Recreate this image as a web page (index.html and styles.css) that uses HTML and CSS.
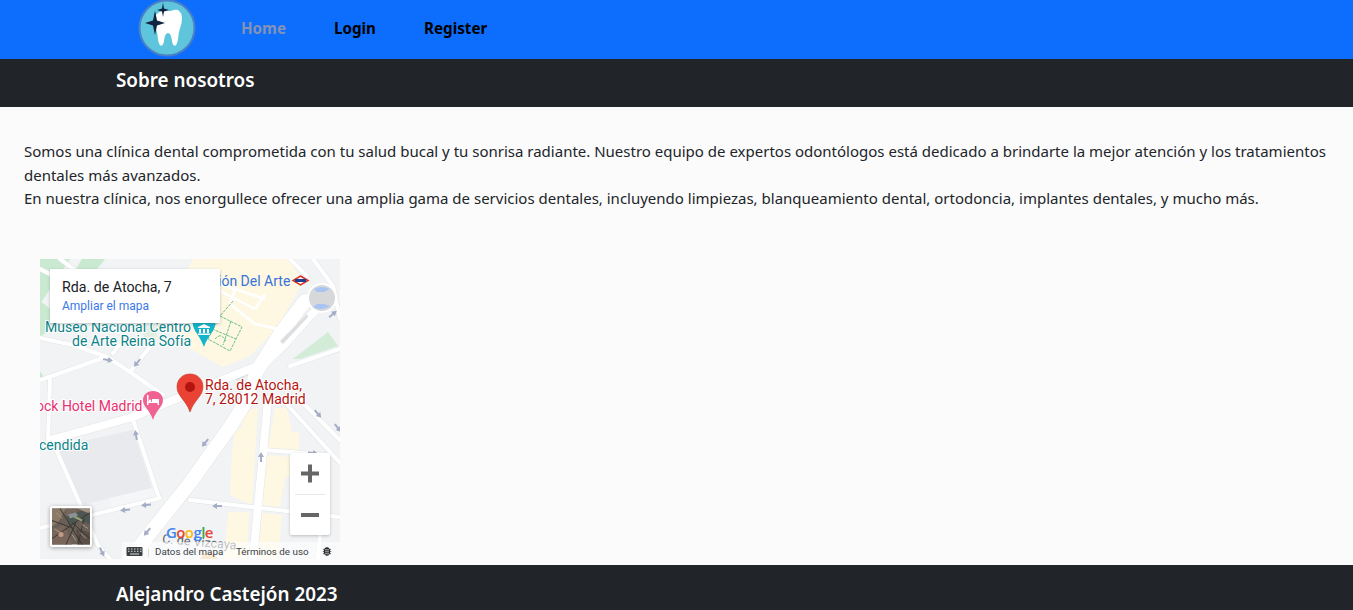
FILE: index.html
```html
<!DOCTYPE html>
<html lang="es">
<head>
<meta charset="utf-8">
<title>Sobre nosotros</title>
<link rel="stylesheet" href="styles.css">
</head>
<body>
<header class="topbar">
  <svg class="logo" viewBox="0 0 58 58" aria-label="Logo">
    <circle cx="29" cy="29" r="27.5" fill="#5fc5dc" stroke="#4a80c4" stroke-width="2"/>
    <path d="M24 12C27 10 30 12.500 33 12 36 11 39 10 41 12 44 14 44.500 19 43.500 24 42.500 29 41 31 40.500 36 40 41 39.500 45 37.500 46.500 35.500 47.500 34.500 45 34 42 33.500 38 32.500 34 30 34 27.500 34 26.500 38 26 42 25.500 45 24.500 47.500 22.500 46.500 20.500 45 20 41 19.500 36 19 31 16.500 28 16 23 15.500 18 19 13.500 24 12z" fill="#fff"/>
    <path d="M17 11.500 19 21.500 27 24 19 26.500 17 36 15 26.500 7 24 15 21.500z" fill="#10243f"/>
    <path d="M25 3.500 26 9.500 31 11 26 12.500 25 18 24 12.500 19 11 24 9.500z" fill="#10243f"/>
  </svg>
  <nav class="nav">
    <a class="nav-link is-active" href="#">Home</a>
    <a class="nav-link" href="#">Login</a>
    <a class="nav-link" href="#">Register</a>
  </nav>
</header>

<div class="band band-title"><h1 class="band-text">Sobre nosotros</h1></div>

<main class="content">
  <p class="intro">Somos una clínica dental comprometida con tu salud bucal y tu sonrisa radiante. Nuestro equipo de expertos odontólogos está dedicado a brindarte la mejor atención y los tratamientos dentales más avanzados.<br>En nuestra clínica, nos enorgullece ofrecer una amplia gama de servicios dentales, incluyendo limpiezas, blanqueamiento dental, ortodoncia, implantes dentales, y mucho más.</p>

  <div class="map">
    <svg class="map-canvas" viewBox="0 0 300 300">
      <defs>
        <path id="arrow" d="M-5-1H0V-3L5 0 0 3V1H-5z"/>
        <g id="roads-thin">
          <path d="M0 79 33 86 67 98 90 113 123 136M0 121 63 99M73 94 83 81M90 113 113 84M10 121 8 181M8 181 15 188 58 286 70 300M93 161 118 236M0 269 120 239"/>
          <path d="M243 141 300 204M260 141 300 181M225 191 290 196M280 276 278 300M250 107 300 90M250 0 267 17M273 0 293 27 300 60M150 241 300 258M0 10 50 35 100 55M20 0 60 30M110 30 145 50"/>
        </g>
        <g id="roads-mid">
          <path d="M10 181 93 158 150 134 217 107"/>
          <path d="M228 141 213 300"/>
          <path d="M217 112 245 85 270 57 283 45"/>
        </g>
        <g id="roads-wide">
          <path d="M90 300 107 278 150 224 190 168 207 141 217 112 240 75 265 42"/>
        </g>
      </defs>

      <rect width="300" height="300" fill="#f1f3f4"/>
      <path d="M17 188 93 171 112 229 70 239 43 246z" fill="#e9eaed"/>
      <path d="M70 239 112 229 118 236 72 250z" fill="#f5f6f7"/>
      <path d="M0 0H30L0 45z M42 0H65L48 22 30 20z M0 42 24 60 0 78z" fill="#c9ead1"/>
      <path d="M0 112 4 118 0 122z" fill="#c9ead1"/>
      <path d="M100 66 120 62 116 80 104 78z" fill="#e2efe2"/>
      <path d="M253 100 288 73 298 87 260 100z" fill="#d3ecd8"/>
      <path d="M153 0H250L260 20V28L238 68 210 97 183 108 147 88 120 62z" fill="#fef8e3"/>
      <path d="M195 171 192 193 190 236 212 246 218 149 200 151 197 161 203 168z M235 149H247L252 173 260 174 258 193 228 189z M226 196 250 198V218L245 219 240 248 222 246z M188 253H209L207 300H184z M222 254 242 256 238 300H218z" fill="#fef8e3"/>
      <path d="M193 118 213 108 216 112 197 122z" fill="#dcdee0"/>

      <g class="roads-edge">
        <use href="#roads-thin" class="w-thin-e"/>
        <use href="#roads-mid" class="w-mid-e"/>
        <use href="#roads-wide" class="w-wide-e"/>
      </g>
      <g class="roads-fill">
        <use href="#roads-thin" class="w-thin"/>
        <use href="#roads-mid" class="w-mid"/>
        <use href="#roads-wide" class="w-wide"/>
      </g>
      <path d="M240 82 267 55 268 58 243 85z" fill="#dcdee0"/>

      <path class="inner-road" d="M180 25 225 40M195 30 190 45 215 65 238 70M180 32 215 50M225 35 215 50M150 30 180 25"/>
      <path class="green-dash" d="M193 42 180 57M180 57 202 68 190 92 168 80 180 57M191 62 183 86M172 70 196 80M175 80C180 75 182 76 186 82"/>

      <circle cx="282" cy="39" r="15" fill="#fff"/>
      <circle cx="282" cy="39" r="13" fill="#d6d8da"/>
      <path d="M274 30Q282 26 290 30L284 33H277z M273 48Q282 53 290 47L284 45H277z" fill="#a9c4f2"/>

      <g class="arrows">
        <use href="#arrow" transform="translate(293 55) rotate(-40)"/>
        <use href="#arrow" transform="translate(68 101) rotate(10)"/>
        <use href="#arrow" transform="translate(97 104) rotate(130)"/>
        <use href="#arrow" transform="translate(96 176) rotate(-100)"/>
        <use href="#arrow" transform="translate(85 251) rotate(175)"/>
        <use href="#arrow" transform="translate(106 246) rotate(175)"/>
        <use href="#arrow" transform="translate(107 273) rotate(130)"/>
        <use href="#arrow" transform="translate(62 293) rotate(65)"/>
        <use href="#arrow" transform="translate(165 184) rotate(130)"/>
        <use href="#arrow" transform="translate(221 198) rotate(-90)"/>
        <use href="#arrow" transform="translate(177 247) rotate(180)"/>
        <use href="#arrow" transform="translate(273 194) rotate(5)"/>
        <use href="#arrow" transform="translate(278 155) rotate(50)"/>
        <use href="#arrow" transform="translate(298 169) rotate(50)"/>
      </g>

      <text class="lbl lbl-blue" x="178" y="27">ión Del Arte</text>
      <path d="M260.500 17 268 21.500 260.500 26 253 21.500z" fill="#fff" stroke="#d92d20" stroke-width="1.500"/>
      <rect x="255" y="20" width="11" height="3" fill="#1c3f94"/>

      <path d="M153 60H175C177 71 169 74 164 88 159 74 151 71 153 60z" fill="#12b5cb"/>
      <path d="M158 68 164 65 170 68V69H158zM159 70H161V74H159zM163 70H165V74H163zM167 70H169V74H167zM158 74.500H170V76H158z" fill="#fff"/>
      <text class="lbl lbl-teal halo" x="5" y="73">Museo Nacional Centro</text>
      <text class="lbl lbl-teal halo" x="32" y="87">de Arte Reina Sofía</text>
      <text class="lbl lbl-teal halo" x="-1" y="191">cendida</text>

      <text class="lbl lbl-pink halo" x="-4" y="152">ock Hotel Madrid</text>
      <path d="M113 132C119 132 123 136 123 141 123 148 116 151 113 161 110 151 103 148 103 141 103 136 107 132 113 132z" fill="#f06292"/>
      <path d="M107 136V146H108.500V144H117.500V146H119V140H112V143H108.500V136zM110 140.500a1.300 1.300 0 1 0 .1 0z" fill="#fff"/>

      <text class="lbl lbl-red halo" x="165" y="131">Rda. de Atocha,</text>
      <text class="lbl lbl-red halo" x="165" y="145">7, 28012 Madrid</text>
      <path d="M150 115C158 115 163 121 163 128 163 137 154 141 150 153 146 141 137 137 137 128 137 121 142 115 150 115z" fill="#ea4335" stroke="#c5302a" stroke-width=".6"/>
      <circle cx="150" cy="128" r="5" fill="#b3140e"/>

      <text class="street" x="122" y="284" transform="rotate(5 122 284)">C. de Vizcaya</text>
      <text class="google" x="126" y="279"><tspan fill="#4285f4">G</tspan><tspan fill="#ea4335">o</tspan><tspan fill="#fbbc05">o</tspan><tspan fill="#4285f4">g</tspan><tspan fill="#34a853">l</tspan><tspan fill="#ea4335">e</tspan></text>
      <path d="M160 300 164 295 172 294 178 300z" fill="#f4c78d"/>

      <rect x="82" y="283" width="218" height="17" fill="#fff" opacity=".6"/>
      <rect x="86.500" y="288" width="16" height="9" rx="1" fill="#3c4043"/>
      <path d="M88 290h1.500M91 290h1.500M94 290h1.500M97 290h1.500M100 290h1.500M88 292.300h1.500M91 292.300h1.500M94 292.300h1.500M97 292.300h1.500M100 292.300h1.500M90 295h9" stroke="#fff" stroke-width=".8"/>
      <path d="M108.500 290V298" stroke="#c4c7c5" stroke-width=".6"/>
      <text class="attr" x="115" y="296">Datos del mapa</text>
      <text class="attr" x="196" y="296">Términos de uso</text>
      <path d="M287 288.300c2 0 3.200 1.700 3.200 4.200s-1.200 4.200-3.200 4.200-3.200-1.700-3.200-4.200 1.200-4.200 3.200-4.200z" fill="#222"/>
      <path d="M285 290.800h4M285 292.800h4M285 294.800h4" stroke="#fff" stroke-width=".7"/>
      <path d="M283 290l1 .8M291 290l-1 .8M282.800 292.500h1M291.200 292.500h-1M283 295l1-.8M291 295l-1-.8" stroke="#222" stroke-width=".7"/>
    </svg>

    <div class="map-card">
      <div class="map-card-title">Rda. de Atocha, 7</div>
      <a class="map-card-link" href="#">Ampliar el mapa</a>
    </div>

    <div class="map-zoom">
      <svg class="map-zoom-icon" viewBox="0 0 40 41"><path d="M11 18.500h7v-7h4v7h7v4h-7v7h-4v-7h-7z" fill="#666"/></svg>
      <div class="map-zoom-sep"></div>
      <svg class="map-zoom-icon" viewBox="0 0 40 41"><path d="M11 19h18v4H11z" fill="#666"/></svg>
    </div>

    <div class="map-thumb">
      <svg viewBox="0 0 38 36" class="map-thumb-img">
        <rect width="38" height="36" fill="#6b6058"/>
        <path d="M0 0H14L6 14 0 18z" fill="#8a7a66"/>
        <path d="M14 0H26L20 8 14 8z" fill="#75685a"/>
        <path d="M14 8 30 2 38 6V16L26 12 18 18z" fill="#4d5650"/>
        <path d="M0 22 12 16 20 36H0z" fill="#7a655a"/>
        <path d="M24 20 38 24V36H26z" fill="#594e48"/>
        <path d="M26 0H38V5L30 2z" fill="#a09384"/>
        <path d="M0 30 38 4M8 0 30 36M20 14 38 30M0 12 22 20M14 36 24 14M32 10 26 36" stroke="#3b3632" stroke-width="1"/>
        <path d="M4 4 10 10M2 20 8 24M28 24 34 30M20 26 24 32M30 16 36 20" stroke="#a8998a" stroke-width="1"/>
        <path d="M22 8 30 12" stroke="#8fa07a" stroke-width="2"/>
        <path d="M16 6 24 4 26 7 18 10z" fill="#8b9297"/>
        <circle cx="9" cy="26" r="2.500" fill="#c49a84"/>
      </svg>
    </div>
  </div>
</main>

<footer class="band band-footer"><p class="band-text">Alejandro Castejón 2023</p></footer>
</body>
</html>
```
FILE: styles.css
```css
* { box-sizing: border-box; }

html, body { height: 100%; }

body {
  margin: 0;
  height: 610px;
  overflow: hidden;
  display: flex;
  flex-direction: column;
  background: #fbfbfb;
  color: #212529;
  font-family: "Noto Sans", "Open Sans", sans-serif;
  font-size: 16px;
  line-height: 24px;
}

.topbar {
  flex: 0 0 59px;
  display: flex;
  align-items: flex-start;
  padding-left: 138px;
  background: #0d6efd;
  overflow: hidden;
}

.logo {
  width: 58px;
  height: 58px;
  margin-top: -1px;
  flex: none;
}

.nav {
  display: flex;
  gap: 48px;
  margin-left: 45px;
  padding-top: 16px;
}

.nav-link {
  color: #000;
  font-weight: 700;
  font-size: 15.200px;
  text-decoration: none;
}

.nav-link.is-active { color: #8392b6; }

.band {
  display: flex;
  align-items: center;
  padding-left: 116px;
  background: #212529;
  color: #fff;
}

.band-title { flex: 0 0 48px; }

.band-footer { flex: 0 0 45px; }

.band-text {
  margin: 0;
  font-size: 18.850px;
  font-weight: 600;
  line-height: 28px;
}

.band-title .band-text { margin-top: -6px; }
.band-footer .band-text { margin-top: 13px; }

.content {
  flex: 1;
  padding: 33px 14px 0 24px;
}

.intro {
  margin: 0 0 48px;
  font-size: 15px;
  line-height: 23.500px;
}

.map {
  position: relative;
  width: 300px;
  height: 300px;
  margin-left: 16px;
  overflow: hidden;
  font-family: Roboto, sans-serif;
}

.map-canvas {
  display: block;
  width: 300px;
  height: 300px;
}

.roads-edge, .roads-fill {
  fill: none;
  stroke-linecap: round;
  stroke-linejoin: round;
}

.roads-edge { stroke: #e2e4e7; }
.roads-fill { stroke: #fff; }

.w-thin { stroke-width: 4; }
.w-mid { stroke-width: 8; }
.w-wide { stroke-width: 14; }
.w-thin-e { stroke-width: 5; }
.w-mid-e { stroke-width: 9; }
.w-wide-e { stroke-width: 15; }

.inner-road {
  fill: none;
  stroke: #fff;
  stroke-width: 2.500;
}

.green-dash {
  fill: none;
  stroke: #6cc184;
  stroke-width: 1;
  stroke-dasharray: 3 1;
}

.arrows { fill: #a5acc6; }

.lbl {
  font-family: Roboto, sans-serif;
  font-size: 14px;
}

.halo {
  paint-order: stroke;
  stroke: #fff;
  stroke-width: 2px;
}

.lbl-blue { fill: #3a72d8; }
.lbl-teal { fill: #0b8389; }
.lbl-pink { fill: #e8306f; }
.lbl-red { fill: #b31412; }

.street {
  font-family: Roboto, sans-serif;
  font-size: 12.500px;
  fill: #5f6368;
}

.google {
  font-family: "Open Sans", sans-serif;
  font-size: 15px;
  font-weight: 600;
  letter-spacing: -.6px;
}

.attr {
  font-family: Roboto, sans-serif;
  font-size: 9.800px;
  fill: #3c4043;
}

.map-card {
  position: absolute;
  top: 10px;
  left: 10px;
  width: 170px;
  height: 54px;
  padding: 9px 12px;
  background: #fff;
  box-shadow: 0 1px 3px rgba(60, 64, 67, .3);
}

.map-card-title {
  font-size: 14.200px;
  line-height: 18px;
  color: #202124;
}

.map-card-link {
  display: block;
  margin-top: 1px;
  font-size: 12px;
  line-height: 18px;
  color: #3b78e7;
  text-decoration: none;
}

.map-zoom {
  position: absolute;
  top: 194px;
  right: 10px;
  width: 40px;
  height: 82px;
  display: flex;
  flex-direction: column;
  background: #fff;
  border-radius: 2px;
  box-shadow: 0 1px 3px rgba(60, 64, 67, .3);
}

.map-zoom-icon {
  display: block;
  flex: none;
  width: 40px;
  height: 41px;
}

.map-zoom-sep {
  flex: none;
  height: 1px;
  margin: 0 5px -1px;
  background: #e6e6e6;
}

.map-thumb {
  position: absolute;
  left: 10px;
  top: 247px;
  width: 42px;
  height: 41px;
  padding: 2px;
  background: #fff;
  border-radius: 2px;
  box-shadow: 0 1px 4px rgba(0, 0, 0, .35);
}

.map-thumb-img {
  display: block;
  width: 38px;
  height: 37px;
}
```
